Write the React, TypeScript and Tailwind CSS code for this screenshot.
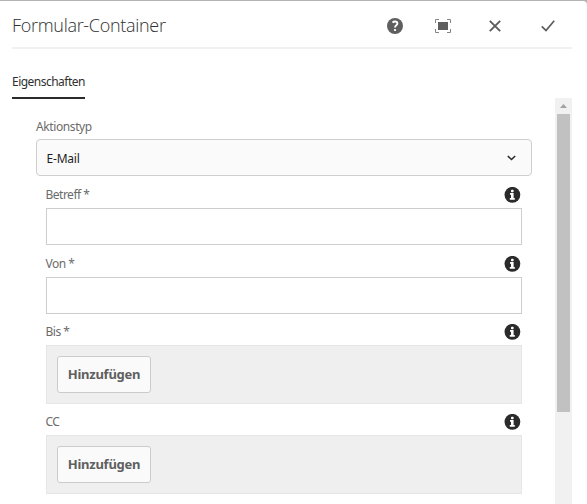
import type { ReactNode } from 'react';

function HelpIcon() {
  return (
    <svg width="16" height="16" viewBox="0 0 16 16" aria-label="Hilfe">
      <circle cx="8" cy="8" r="8" fill="#5f5f5f" />
      <path d="M5.6 4.6C6.2 3.8 7 3.5 8 3.5c1.5 0 2.4.8 2.4 2 0 1.9-2.4 1.9-2.4 4" fill="none" stroke="#fff" strokeWidth="1.9" />
      <rect x="6.9" y="10.9" width="2.2" height="2.1" rx=".8" fill="#fff" />
    </svg>
  );
}

function FullscreenIcon() {
  return (
    <svg width="16" height="14" viewBox="0 0 16 14" aria-label="Vollbild">
      <rect x="3" y="3" width="10" height="8" fill="#5f5f5f" />
      <path d="M.5 4V.5H4M12 .5h3.5V4M15.5 10v3.5H12M4 13.5H.5V10" fill="none" stroke="#858585" />
    </svg>
  );
}

function CloseIcon() {
  return (
    <svg width="12" height="12" viewBox="0 0 12 12" aria-label="Abbrechen">
      <path d="M.8.8l10.4 10.4M11.2.8L.8 11.2" stroke="#5c5c5c" strokeWidth="1.9" />
    </svg>
  );
}

function CheckIcon() {
  return (
    <svg width="14" height="12" viewBox="0 0 14 12" aria-label="Fertig">
      <path d="M.8 6.3l4.2 4.3L13.2.8" fill="none" stroke="#5c5c5c" strokeWidth="1.7" />
    </svg>
  );
}

function InfoIcon() {
  return (
    <svg width="17" height="16" viewBox="0 0 17 16" aria-label="Info">
      <circle cx="8.4" cy="7.8" r="7.9" fill="#2b2b2b" />
      <rect x="7" y="2.8" width="2.6" height="2.4" rx=".7" fill="#fff" />
      <path d="M6 6h3.6v5h1.2v1.8H5.8V11H7V7.8H6z" fill="#fff" />
    </svg>
  );
}

function Field({ label, row, children }: { label: string; row: string; children: ReactNode }) {
  return (
    <div className="px-[10px]">
      <div className={`flex items-start justify-between pr-px ${row}`}>
        <label className="-ml-[0.5px] text-xs leading-4 tracking-[-0.5px] text-[#6b6b6b]">{label}</label>
        <InfoIcon />
      </div>
      {children}
    </div>
  );
}

function TextInput() {
  return <input className="block h-[37px] w-full border border-[#cdcdcd] bg-white outline-none" />;
}

function MultiField() {
  return (
    <div className="h-[59px] border border-[#e6e6e6] bg-[#efefef] px-[10px] py-[10px]">
      <button className="flex h-[37px] w-[94px] items-center justify-center rounded-[3px] border border-[#cbcbcb] bg-[#fafafa] text-[13px] font-bold tracking-[-0.25px] text-[#5f5f5f]">
        Hinzufügen
      </button>
    </div>
  );
}

export default function App() {
  return (
    <div className="h-[504px] w-[587px] overflow-hidden bg-[#b3b3b3] pt-px font-['Noto_Sans','Open_Sans',sans-serif]">
      <div className="flex h-full flex-col rounded-tr-[4px] bg-white pr-[15px]">
        <header className="ml-3 flex h-12 shrink-0 items-center justify-between border-b-2 border-[#f0f0f0]">
          <h1 className="pt-[2px] font-['Open_Sans'] text-[18px] font-light leading-6 tracking-[-0.3px] text-[#303030]">Formular-Container</h1>
          <div className="flex items-center pt-[3px] pr-[17px]">
            <HelpIcon />
            <span className="ml-8 flex"><FullscreenIcon /></span>
            <span className="ml-[38px] flex"><CloseIcon /></span>
            <span className="ml-[40px] flex"><CheckIcon /></span>
          </div>
        </header>
        <nav className="ml-3 flex h-[49px] shrink-0 items-end">
          <div className="-mb-px flex h-[27px] w-[73px] items-start border-b-2 border-[#2b2b2b] text-xs leading-5 tracking-[-0.52px] whitespace-nowrap text-[#303030]">
            Eigenschaften
          </div>
        </nav>
        <div className="flex min-h-0 flex-1 justify-between pl-9">
          <main className="w-[496px] pt-[21px]">
            <div className="h-5 text-xs leading-4 tracking-[-0.4px] text-[#6b6b6b]">Aktionstyp</div>
            <button className="flex h-[37px] w-full items-center justify-between rounded-[4px] border border-[#cfcfcf] bg-[#fafafa] pr-[15px] pl-[9.5px] text-xs tracking-[-0.2px] text-[#1f1f1f]">
              <span className="pt-[2px]">E-Mail</span>
              <svg width="9" height="6" viewBox="0 0 9 6"><path d="M.8 1l3.7 3.5L8.2 1" fill="none" stroke="#2b2b2b" strokeWidth="1.6" /></svg>
            </button>
            <Field label="Betreff *" row="h-8 pt-[11px]"><TextInput /></Field>
            <Field label="Von *" row="h-8 pt-[11px]"><TextInput /></Field>
            <Field label="Bis *" row="h-[31px] pt-[10px]"><MultiField /></Field>
            <Field label="CC" row="h-[31px] pt-[10px]"><MultiField /></Field>
          </main>
          <div className="flex w-[17px] flex-col items-center bg-[#f1f1f1]">
            <div className="flex h-4 items-center">
              <svg width="7" height="4" viewBox="0 0 7 4"><path d="M0 4L3.5 0 7 4z" fill="#a3a3a3" /></svg>
            </div>
            <div className="h-[298px] w-[13px] bg-[#c1c1c1]" />
          </div>
        </div>
      </div>
    </div>
  );
}
